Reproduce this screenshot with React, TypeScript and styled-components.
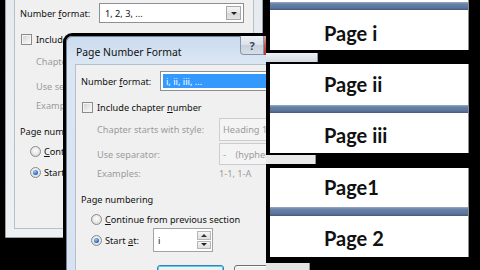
import React from "react";
import styled, { createGlobalStyle } from "styled-components";

const GlobalStyle = createGlobalStyle`
  html, body {
    margin: 0;
    padding: 0;
    background: #000;
  }
  body {
    width: 480px;
    height: 270px;
    overflow: hidden;
  }
`;

const Screen = styled.div`
  width: 480px;
  height: 270px;
  display: flex;
  background: #000;
  overflow: hidden;
  font-family: "Noto Sans", "Open Sans", sans-serif;
`;

/* ---------- left: the two dialogs ---------- */

const Desktop = styled.div`
  position: relative;
  width: 266px;
  height: 270px;
  flex-shrink: 0;
  overflow: hidden;
`;

const Window = styled.div<{ $x: number; $y: number; $active?: boolean }>`
  position: absolute;
  left: ${(p) => p.$x}px;
  top: ${(p) => p.$y}px;
  width: 258px;
  height: 270px;
  box-sizing: border-box;
  display: flex;
  flex-direction: column;
  border: 1px solid ${(p) => (p.$active ? "#6f84a0" : "#9aa0a8")};
  border-radius: 6px 6px 0 0;
  background: ${(p) =>
    p.$active
      ? "linear-gradient(180deg, #cbdbee 0, #dbe6f3 26px, #d6e2f0 100%)"
      : "linear-gradient(180deg, #e6eaef 0, #eef1f4 100%)"};
  box-shadow: 0 0 0 3px #000;
`;

const TitleBar = styled.div`
  height: 27px;
  box-sizing: border-box;
  flex-shrink: 0;
  display: flex;
  align-items: center;
  padding: 3px 19px 0 9px;
`;

const Title = styled.span`
  flex: 1;
  font-size: 10.4px;
  color: #111;
`;

const HelpButton = styled.div`
  align-self: flex-start;
  margin-top: -4px;
  width: 24px;
  height: 19px;
  box-sizing: border-box;
  display: flex;
  align-items: center;
  justify-content: center;
  border: 1px solid #8595aa;
  border-top: none;
  border-radius: 0 0 0 4px;
  background: linear-gradient(180deg, #eef2f7 0, #d9e1ea 50%, #c6d0dc 51%, #d7dee7 100%);
  font-size: 11px;
  font-weight: 700;
  color: #445;
`;

const CloseButton = styled.div`
  align-self: flex-start;
  margin-top: -4px;
  width: 40px;
  height: 19px;
  border-radius: 0 0 4px 0;
  background: linear-gradient(180deg, #d9a49a 0, #c4574a 50%, #b43a2c 100%);
`;

const Body = styled.div`
  flex: 1;
  display: flex;
  padding: 0 8px 8px;
`;

const Panel = styled.div`
  flex: 1;
  display: flex;
  flex-direction: column;
  padding-left: 5px;
  background: #f0f0f0;
  border: 1px solid #b5c0cd;
  font-size: 9.2px;
  color: #111;
`;

const Row = styled.div<{ $mt: number; $h: number }>`
  display: flex;
  align-items: center;
  flex-shrink: 0;
  margin-top: ${(p) => p.$mt}px;
  height: ${(p) => p.$h}px;
  white-space: nowrap;
`;

const FieldLabel = styled.span<{ $w?: number; $ml?: number; $muted?: boolean }>`
  width: ${(p) => (p.$w ? `${p.$w}px` : "auto")};
  flex-shrink: 0;
  margin-left: ${(p) => p.$ml ?? 0}px;
  color: ${(p) => (p.$muted ? "#9b9b9b" : "#111")};
`;

const Key = styled.span`
  text-decoration: underline;
`;

const Combo = styled.div`
  width: 145px;
  height: 20px;
  box-sizing: border-box;
  flex-shrink: 0;
  display: flex;
  padding: 2px;
  gap: 2px;
  border: 1px solid #8d8f91;
  background: #fff;
`;

const ComboValue = styled.div<{ $selected?: boolean }>`
  flex: 1;
  display: flex;
  align-items: center;
  padding-left: 3px;
  background: ${(p) => (p.$selected ? "#3399ff" : "transparent")};
  color: ${(p) => (p.$selected ? "#fff" : "#111")};
`;

const DropButton = styled.div`
  width: 15px;
  box-sizing: border-box;
  display: flex;
  align-items: center;
  justify-content: center;
  border: 1px solid #a8a8a8;
  background: linear-gradient(180deg, #f4f4f4 0, #e6e6e6 50%, #d6d6d6 51%, #e4e4e4 100%);
`;

const Arrow = styled.span<{ $up?: boolean }>`
  width: 0;
  height: 0;
  border-left: 3px solid transparent;
  border-right: 3px solid transparent;
  ${(p) => (p.$up ? "border-bottom: 3px solid #333;" : "border-top: 3px solid #222;")}
`;

const Check = styled.span`
  width: 11px;
  height: 11px;
  box-sizing: border-box;
  flex-shrink: 0;
  margin: 0 4px 0 1px;
  border: 1px solid #8c8c8c;
  box-shadow: inset 0 0 0 1px #f4f4f4;
  background: linear-gradient(135deg, #cfcfcf 0, #ececec 60%, #f8f8f8 100%);
`;

const Radio = styled.span<{ $on?: boolean }>`
  width: 11px;
  height: 11px;
  box-sizing: border-box;
  flex-shrink: 0;
  margin: 0 3px 0 10px;
  display: flex;
  align-items: center;
  justify-content: center;
  border: 1px solid #8a8a8a;
  border-radius: 50%;
  background: radial-gradient(circle at 50% 40%, #ffffff 0, #dadada 80%);
  &::after {
    content: "";
    display: ${(p) => (p.$on ? "block" : "none")};
    width: 5px;
    height: 5px;
    border-radius: 50%;
    background: radial-gradient(circle at 40% 35%, #9cd0ff 0, #2a6ec0 60%, #1b4f93 100%);
  }
`;

const DisabledBox = styled.div`
  height: 100%;
  width: 80px;
  box-sizing: border-box;
  flex-shrink: 0;
  display: flex;
  align-items: center;
  padding-left: 3px;
  border: 1px solid #cdcdcd;
  background: #f4f4f4;
  color: #9b9b9b;
  white-space: pre;
`;

const MutedValue = styled.span`
  color: #9b9b9b;
`;

const SpinField = styled.div`
  width: 60px;
  height: 100%;
  box-sizing: border-box;
  display: flex;
  border: 1px solid #a3a3a3;
  background: #fff;
`;

const SpinText = styled.span`
  flex: 1;
  display: flex;
  align-items: center;
  padding-left: 4px;
`;

const SpinButtons = styled.div`
  width: 14px;
  display: flex;
  flex-direction: column;
  gap: 1px;
  padding: 2px 1px 2px 0;
`;

const SpinHalf = styled.div`
  flex: 1;
  display: flex;
  align-items: center;
  justify-content: center;
  border: 1px solid #b6b6b6;
  background: linear-gradient(180deg, #f6f6f6, #dedede);
`;

const PushButton = styled.div<{ $default?: boolean }>`
  width: 67px;
  height: 100%;
  box-sizing: border-box;
  flex-shrink: 0;
  border: 1px solid ${(p) => (p.$default ? "#3c7fb1" : "#707070")};
  border-radius: 3px;
  box-shadow: ${(p) => (p.$default ? "inset 0 0 0 1px #48d7fb" : "inset 0 0 0 1px #fbfbfb")};
  background: linear-gradient(180deg, #f2f2f2 0, #ebebeb 50%, #dddddd 51%, #cfcfcf 100%);
`;

type DialogProps = { x: number; y: number; active?: boolean; format: string };

const PageNumberDialog = ({ x, y, active, format }: DialogProps) => (
  <Window $x={x} $y={y} $active={active}>
    <TitleBar>
      <Title>Page Number Format</Title>
      <HelpButton>?</HelpButton>
      <CloseButton />
    </TitleBar>
    <Body>
      <Panel>
        <Row $mt={6} $h={20}>
          <FieldLabel $w={79}>
            Number <Key>f</Key>ormat:
          </FieldLabel>
          <Combo>
            <ComboValue $selected={active}>{format}</ComboValue>
            <DropButton>
              <Arrow />
            </DropButton>
          </Combo>
        </Row>
        <Row $mt={9} $h={14}>
          <Check />
          <FieldLabel>
            Include chapter <Key>n</Key>umber
          </FieldLabel>
        </Row>
        <Row $mt={4} $h={23}>
          <FieldLabel $w={122} $ml={16} $muted>
            Chapter starts with style:
          </FieldLabel>
          <DisabledBox>Heading 1</DisabledBox>
        </Row>
        <Row $mt={2} $h={22}>
          <FieldLabel $w={122} $ml={16} $muted>
            Use separator:
          </FieldLabel>
          <DisabledBox>{"-    (hyphen)"}</DisabledBox>
        </Row>
        <Row $mt={1} $h={14}>
          <FieldLabel $w={122} $ml={16} $muted>
            Examples:
          </FieldLabel>
          <MutedValue>1-1, 1-A</MutedValue>
        </Row>
        <Row $mt={12} $h={14}>
          <FieldLabel>Page numbering</FieldLabel>
        </Row>
        <Row $mt={6} $h={14}>
          <Radio />
          <FieldLabel>
            <Key>C</Key>ontinue from previous section
          </FieldLabel>
        </Row>
        <Row $mt={2} $h={24}>
          <Radio $on />
          <FieldLabel $w={48}>
            Start <Key>a</Key>t:
          </FieldLabel>
          <SpinField>
            <SpinText>i</SpinText>
            <SpinButtons>
              <SpinHalf>
                <Arrow $up />
              </SpinHalf>
              <SpinHalf>
                <Arrow />
              </SpinHalf>
            </SpinButtons>
          </SpinField>
        </Row>
        <Row $mt={13} $h={23}>
          <FieldLabel $w={76} />
          <PushButton $default />
          <FieldLabel $w={10} />
          <PushButton />
        </Row>
      </Panel>
    </Body>
  </Window>
);

/* ---------- right: page header / footer strips ---------- */

const Pages = styled.div`
  display: flex;
  flex-direction: column;
  padding-left: 4px;
  width: 199px;
  flex-shrink: 0;
`;

const Sheet = styled.div`
  display: flex;
  flex-direction: column;
  background: #fff;
  border-right: 1px solid #8c8c8c;
`;

const Band = styled.div<{ $h: number; $pt?: number }>`
  height: ${(p) => p.$h}px;
  box-sizing: border-box;
  padding: ${(p) => p.$pt ?? 0}px 0 0 54px;
`;

const Stripe = styled.div<{ $h: number }>`
  height: ${(p) => p.$h}px;
  background: linear-gradient(180deg, #9aabc4 0, #6781a7 25%, #5b7499 75%, #43587b 100%);
`;

const PageLabel = styled.div`
  font-family: Lato, "Open Sans", sans-serif;
  font-weight: 700;
  font-size: 20px;
  line-height: 20px;
  color: #111;
`;

const Gap = styled.div<{ $h: number; $pt: number }>`
  height: ${(p) => p.$h}px;
  box-sizing: border-box;
  padding-top: ${(p) => p.$pt}px;
  margin-left: -4px;
`;

const Scrap = styled.div<{ $w: number; $h: number; $tone: string }>`
  width: ${(p) => p.$w}px;
  height: ${(p) => p.$h}px;
  background: ${(p) => p.$tone};
  border-right: 1px solid #8d96a3;
`;

export default function App() {
  return (
    <Screen>
      <GlobalStyle />
      <Desktop>
        <PageNumberDialog x={5} y={-32} format="1, 2, 3, ..." />
        <PageNumberDialog x={66} y={36} active format="i, ii, iii, ..." />
      </Desktop>
      <Pages>
        <Sheet>
          <Band $h={2} />
          <Stripe $h={8} />
          <Band $h={40} $pt={13}>
            <PageLabel>Page i</PageLabel>
          </Band>
        </Sheet>
        <Gap $h={14} $pt={3}>
          <Scrap $w={51} $h={9} $tone="linear-gradient(180deg, #eef1f5, #d3dae3)" />
        </Gap>
        <Sheet>
          <Band $h={41} $pt={10}>
            <PageLabel>Page ii</PageLabel>
          </Band>
          <Stripe $h={8} />
          <Band $h={40} $pt={12}>
            <PageLabel>Page iii</PageLabel>
          </Band>
        </Sheet>
        <Gap $h={15} $pt={2}>
          <Scrap $w={49} $h={9} $tone="#e9e9e9" />
        </Gap>
        <Sheet>
          <Band $h={39} $pt={9}>
            <PageLabel>Page1</PageLabel>
          </Band>
          <Stripe $h={9} />
          <Band $h={41} $pt={12}>
            <PageLabel>Page 2</PageLabel>
          </Band>
        </Sheet>
        <Gap $h={13} $pt={6}>
          <Scrap $w={43} $h={7} $tone="#e4e4e4" />
        </Gap>
      </Pages>
    </Screen>
  );
}
